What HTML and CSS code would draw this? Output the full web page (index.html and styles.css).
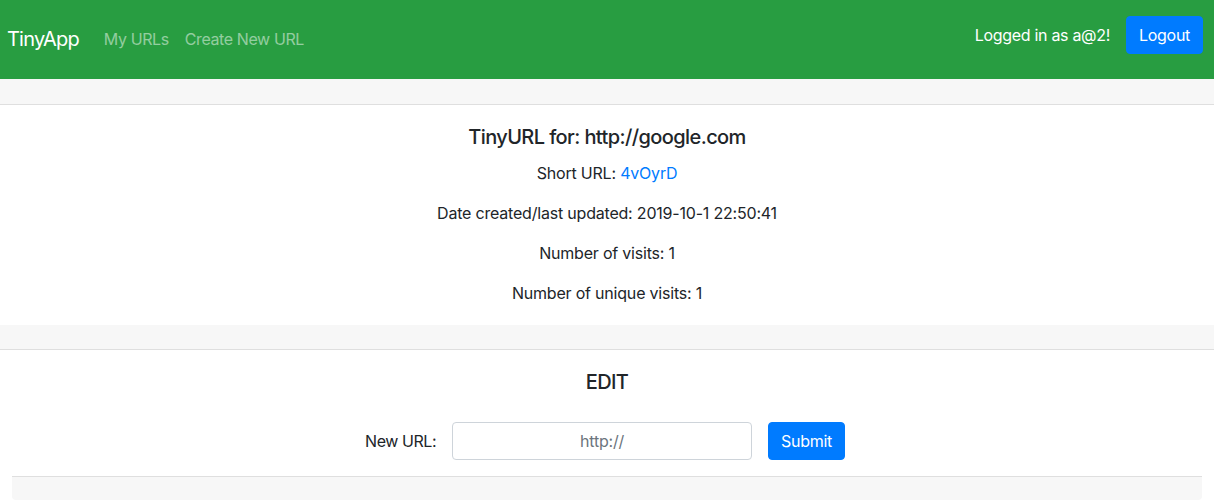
FILE: index.html
```html
<!DOCTYPE html>
<html lang="en">
<head>
<meta charset="utf-8">
<title>TinyApp</title>
<link rel="stylesheet" href="styles.css">
</head>
<body>
<nav class="navbar">
  <div class="nav-left">
    <a class="brand" href="#">TinyApp</a>
    <a class="nav-link" href="#">My URLs</a>
    <a class="nav-link" href="#">Create New URL</a>
  </div>
  <div class="nav-right">
    <span class="user">Logged in as a@2!</span>
    <button class="btn" type="button">Logout</button>
  </div>
</nav>

<section class="card">
  <div class="card-header"></div>
  <div class="card-body">
    <h5 class="title">TinyURL for: http://google.com</h5>
    <p class="line">Short URL: <a class="link" href="#">4vOyrD</a></p>
    <p class="line">Date created/last updated: 2019-10-1 22:50:41</p>
    <p class="line">Number of visits: 1</p>
    <p class="line last">Number of unique visits: 1</p>
  </div>
</section>

<section class="card">
  <div class="card-header card-header-sm"></div>
  <div class="card-body edit-body">
    <h5 class="title">EDIT</h5>
    <form class="edit-form">
      <label class="label" for="newurl">New URL:</label>
      <input class="input" id="newurl" type="text" placeholder="http://">
      <button class="btn" type="submit">Submit</button>
    </form>
  </div>
  <div class="card-footer"></div>
</section>
</body>
</html>
```

FILE: styles.css
```css
* { box-sizing: border-box; }
html, body {
  margin: 0;
  padding: 0;
  background: #fff;
  font-family: Inter, "Noto Sans", "Liberation Sans", sans-serif;
  font-size: 16px;
  line-height: 1.5;
  letter-spacing: -0.2px;
  color: #212529;
}
.navbar {
  height: 79px;
  background: #289d41;
  display: flex;
  justify-content: space-between;
  padding: 0 11px 0 7px;
}
.nav-left {
  display: flex;
  align-items: center;
  padding-bottom: 1px;
}
.brand {
  font-size: 20px;
  line-height: 30px;
  letter-spacing: -0.8px;
  color: #fff;
  text-decoration: none;
  margin-right: 17px;
}
.nav-link {
  color: rgba(255,255,255,.5);
  text-decoration: none;
  letter-spacing: -0.4px;
  padding: 8px;
}
.nav-right {
  display: flex;
  align-items: center;
  gap: 16px;
  margin-top: 16px;
  align-self: flex-start;
}
.user { color: #fff; letter-spacing: -0.3px; }
.btn {
  font-family: inherit;
  font-size: 16px;
  line-height: 24px;
  letter-spacing: -0.3px;
  color: #fff;
  background: #007bff;
  border: 1px solid #007bff;
  border-radius: 4px;
  padding: 6px 12px;
  height: 38px;
  cursor: pointer;
}
.card-header {
  height: 26px;
  background: #f7f7f7;
  border-bottom: 1px solid #dfdfdf;
}
.card-header-sm { height: 25px; }
.card-body {
  padding: 20px;
  text-align: center;
}
.title {
  font-size: 20px;
  font-weight: 500;
  line-height: 24px;
  letter-spacing: -0.6px;
  margin: 0 0 12px;
}
.line { margin: 0 0 16px; }
.line.last { margin-bottom: 0; }
.link { color: #007bff; text-decoration: none; }
.edit-body { padding-bottom: 16px; }
.label { letter-spacing: -0.45px; }
.edit-form {
  display: flex;
  justify-content: center;
  align-items: center;
  gap: 16px;
  margin-top: 28px;
  padding-right: 4px;
}
.input {
  width: 300px;
  height: 38px;
  border: 1px solid #ced4da;
  border-radius: 4px;
  font-family: inherit;
  font-size: 16px;
  letter-spacing: -0.2px;
  text-align: center;
  color: #495057;
  padding: 6px 12px;
}
.input::placeholder { color: #6c757d; }
.card-footer {
  margin: 0 12px;
  height: 24px;
  background: #f7f7f7;
  border-top: 1px solid #dfdfdf;
  border-radius: 0 0 4px 4px;
}
```
